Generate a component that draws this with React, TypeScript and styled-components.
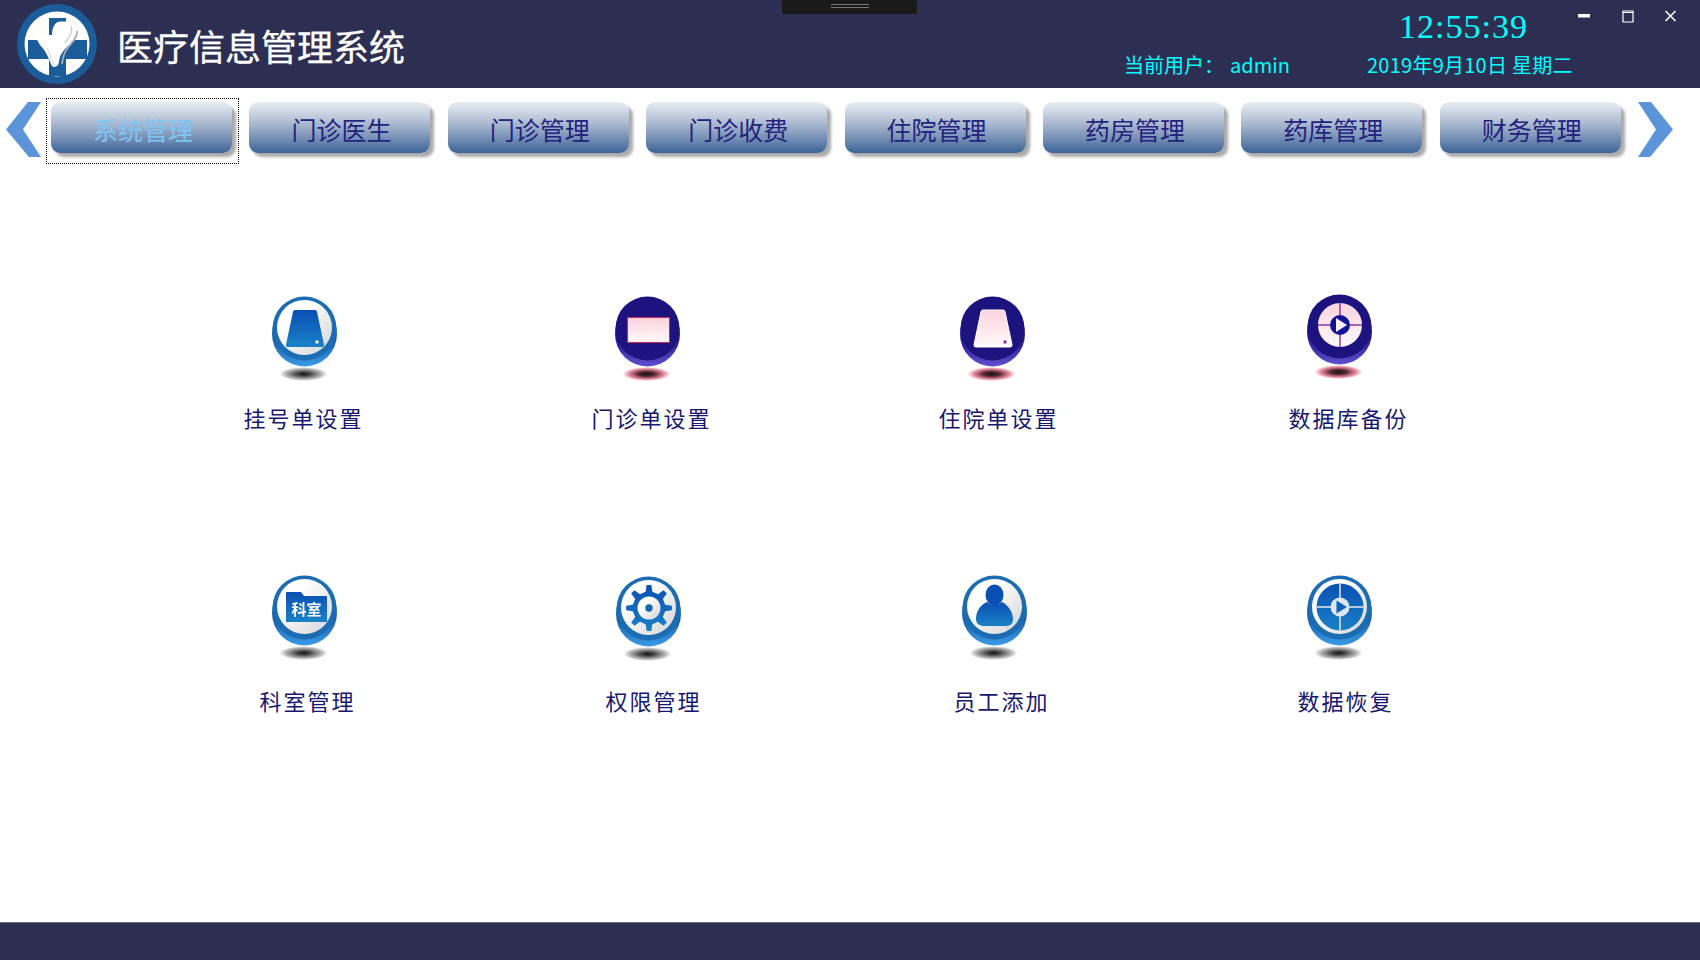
import React, { useId } from 'react';
import styled, { createGlobalStyle } from 'styled-components';

const SANS = `"Noto Sans CJK SC", "Liberation Sans", sans-serif`;

const GlobalStyle = createGlobalStyle`
    html, body {
        margin: 0;
        padding: 0;
        background: #fff;
    }
`;

const Page = styled.div`
    position: relative;
    display: flex;
    flex-direction: column;
    width: 1700px;
    height: 960px;
    overflow: hidden;
    background: #fff;
    font-family: ${SANS};
`;

const Header = styled.header`
    display: flex;
    flex: none;
    height: 88px;
    background: #2d2f52;
`;

const DragHandle = styled.div`
    position: absolute;
    top: 0;
    left: 782px;
    width: 135px;
    height: 14px;
    background: #1a1a1a;

    &::after {
        content: '';
        position: absolute;
        top: 4px;
        left: 49px;
        width: 38px;
        height: 2px;
        border-top: 1px solid #777;
        border-bottom: 1px solid #777;
    }
`;

const Brand = styled.div`
    display: flex;
    align-items: center;
    padding-left: 17px;
    gap: 20px;
`;

const Title = styled.h1`
    margin: 1px 0 0;
    font-size: 36px;
    font-weight: 400;
    line-height: 1;
    color: #fff;
    -webkit-text-stroke: 0.3px #fff;
`;

const InfoBlock = styled.div`
    display: flex;
    flex-direction: column;
    width: 450px;
    margin-left: auto;
`;

const Clock = styled.div`
    height: 51px;
    padding-left: 275px;
    font-family: "Liberation Serif", serif;
    font-size: 34px;
    letter-spacing: 1px;
    line-height: 54px;
    color: #00ffff;
`;

const InfoRow = styled.div`
    display: flex;
    font-size: 20px;
    line-height: 28px;
    white-space: nowrap;
    color: #00ffff;
`;

const UserLabel = styled.span`
    width: 106px;
`;

const UserName = styled.span`
    width: 137px;
`;

const DateText = styled.span`
    letter-spacing: 0.25px;
`;

const WinControls = styled.div`
    display: flex;
    flex: none;
    gap: 23.5px;
    width: 126px;
    padding: 6px 0 0;
    box-sizing: border-box;
`;

const WinButton = styled.button`
    width: 20px;
    height: 20px;
    padding: 0;
    border: 0;
    background: none;
    color: #fff;
`;

const Nav = styled.nav`
    display: flex;
    flex: none;
    align-items: flex-start;
    height: 70px;
    padding: 14px 0 0 6px;
    box-sizing: border-box;
`;

const NavArrow = styled.svg<{ $after?: boolean }>`
    flex: none;
    width: 35px;
    height: 55px;
    margin: ${p => (p.$after ? '0 0 0 17px' : '0 10px 0 0')};
`;

const NavList = styled.div`
    display: flex;
    gap: 17.4px;
`;

const NavButton = styled.button<{ $active?: boolean }>`
    position: relative;
    flex: none;
    width: 181px;
    height: 51px;
    padding: 4px 0 0 3px;
    border: 0;
    border-radius: 9px;
    background: linear-gradient(to bottom, #e9eef4 0%, #b6c3d6 35%, #7c94b8 68%, #3b6398 100%);
    box-shadow: 4px 4px 3px #aaa;
    font-family: ${SANS};
    font-size: 25px;
    line-height: 1;
    color: ${p => (p.$active ? '#7cc6f6' : '#23227e')};

    ${p => p.$active && `
        &::after {
            content: '';
            position: absolute;
            top: -4px;
            left: -5px;
            right: -7px;
            bottom: -11px;
            border: 1px dotted #000;
        }
    `}
`;

const Main = styled.main`
    flex: 1;
    padding: 132px 0 0 132px;
`;

const FuncGrid = styled.div`
    display: grid;
    grid-template-columns: repeat(4, 345px);
    row-gap: 134px;
`;

const FuncItem = styled.div`
    display: flex;
    flex-direction: column;
    align-items: center;
`;

const IconSvg = styled.svg<{ $dx: number; $dy: number }>`
    display: block;
    width: 84px;
    height: 96px;
    margin-left: ${p => p.$dx * 2}px;
    margin-top: ${p => p.$dy}px;
    margin-bottom: ${p => -p.$dy}px;
    filter: blur(0.45px);
`;

const FuncLabel = styled.div<{ $dx: number; $top: number }>`
    margin-left: ${p => p.$dx * 2}px;
    margin-top: ${p => p.$top}px;
    font-family: "Liberation Serif", ${SANS};
    font-size: 22px;
    letter-spacing: 2px;
    line-height: 30px;
    color: #17176f;
`;

const Footer = styled.footer`
    flex: none;
    height: 38px;
    box-sizing: border-box;
    border-top: 1px solid #6d6e85;
    background: #2d2f52;
`;

const Logo: React.FC = () => (
    <svg width="80" height="80" viewBox="0 0 80 80">
        <circle cx="40" cy="40" r="40" fill="#1b5c9b" />
        <circle cx="40" cy="40" r="32.500" fill="#fdfdfb" />
        <path d="M32 14h17v22h21v19H49v17H32V55H11V36h21z" fill="#1b5c9b" />
        <path
            d="M18 33c3-2 11-2 17-2 0-5 1-9 4-12 6-3 16-1 21 4 3 4 2 8-2 13-3 3-6 5-8 7-4 4-6 7-7 10-1 3-1 6-2 8-2 2-4 2-5 2-3-3-3-7-5-10-2-5-5-9-8-12-2-3-3-6-5-8z"
            fill="#fff"
        />
        <path d="M60 27c1 7-6 12-10 18-4 5-4 10-5 15" fill="none" stroke="#a9adb4" strokeWidth="1.700" />
        <path d="M54 22c3 6-2 11-6 17" fill="none" stroke="#c9ccd2" strokeWidth="1.300" />
        <path d="M30 44c3 5 4 11 7 17" fill="none" stroke="#dcdde0" strokeWidth="1.200" />
    </svg>
);

type Tone = 'blue' | 'purple';
type Glyph = 'drive' | 'card' | 'target' | 'folder' | 'gear' | 'person' | 'restore';

const TONES = {
    blue: { ring: '#1c6cb4', lip1: '#1a62a9', lip2: '#3a9be8', shadow: '#999', mid: '#555' },
    purple: { ring: '#1d137f', lip1: '#241a8c', lip2: '#5f50cf', shadow: '#d9667f', mid: '#5a2a35' },
};

const gearPath = (cx: number, cy: number, outer: number, inner: number, teeth: number) => {
    const step = (Math.PI * 2) / teeth;
    const pts: string[] = [];
    for (let i = 0; i < teeth; i++) {
        const a = i * step - Math.PI / 2;
        const corners: [number, number][] = [
            [inner, a - step * 0.26],
            [outer, a - step * 0.13],
            [outer, a + step * 0.13],
            [inner, a + step * 0.26],
        ];
        corners.forEach(([r, t]) => {
            pts.push(`${(cx + r * Math.cos(t)).toFixed(2)} ${(cy + r * Math.sin(t)).toFixed(2)}`);
        });
    }
    return `M${pts.join('L')}Z`;
};

const FuncIcon: React.FC<{ tone: Tone; glyph: Glyph; dx: number; dy: number }> = ({ tone, glyph, dx, dy }) => {
    const id = useId();
    const c = TONES[tone];
    const blueFill = `url(#${id}-fill)`;
    const whiteDisc = tone === 'blue';

    return (
        <IconSvg viewBox="0 0 84 96" $dx={dx} $dy={dy}>
            <defs>
                <linearGradient id={`${id}-lip`} x1="0" y1="0" x2="0" y2="1">
                    <stop offset="0.6" stopColor={c.lip1} />
                    <stop offset="1" stopColor={c.lip2} />
                </linearGradient>
                <linearGradient id={`${id}-disc`} x1="0" y1="0" x2="1" y2="1">
                    <stop offset="0.3" stopColor="#ffffff" />
                    <stop offset="1" stopColor="#d4d4d6" />
                </linearGradient>
                <linearGradient id={`${id}-fill`} x1="0" y1="0" x2="0" y2="1">
                    <stop offset="0" stopColor="#0a4fb4" />
                    <stop offset="1" stopColor="#1a82c6" />
                </linearGradient>
                <linearGradient id={`${id}-pink`} x1="0" y1="0" x2="0" y2="1">
                    <stop offset="0" stopColor="#fbd3de" />
                    <stop offset="1" stopColor="#fffafb" />
                </linearGradient>
                <radialGradient id={`${id}-shadow`}>
                    <stop offset="0" stopColor="#111" />
                    <stop offset="0.35" stopColor={c.mid} />
                    <stop offset="0.72" stopColor={c.shadow} stopOpacity="0.8" />
                    <stop offset="1" stopColor={c.shadow} stopOpacity="0" />
                </radialGradient>
            </defs>

            <ellipse cx="40.500" cy="84" rx="24" ry="7" fill={`url(#${id}-shadow)`} />
            <circle cx="41.500" cy="44" r="32.500" fill={`url(#${id}-lip)`} />
            <circle cx="41.500" cy="38.500" r="32" fill={c.ring} />

            {whiteDisc && <circle cx="41.500" cy="37.500" r="27.500" fill={`url(#${id}-disc)`} />}

            {glyph === 'drive' && (
                <>
                    <path
                        d="M32 20h20a2 2 0 0 1 2 1.700l7 33a2 2 0 0 1-2 2.300H25a2 2 0 0 1-2-2.300l7-33a2 2 0 0 1 2-1.700z"
                        fill={tone === 'blue' ? blueFill : `url(#${id}-pink)`}
                        stroke={tone === 'blue' ? 'none' : '#fff'}
                    />
                    <circle cx="54" cy="52" r="1.700" fill={tone === 'blue' ? '#fff' : '#8a2fa8'} />
                </>
            )}

            {glyph === 'card' && (
                <rect x="21.500" y="27.500" width="42" height="25" fill={`url(#${id}-pink)`} stroke="#c22a58" strokeWidth="1.100" />
            )}

            {glyph === 'target' && (
                <>
                    <circle cx="42" cy="37" r="22" fill={`url(#${id}-pink)`} />
                    <path d="M42 15v44M20 37h44" stroke="#8c3c9c" strokeWidth="1.500" />
                    <circle cx="42" cy="37" r="10" fill="#14149a" />
                    <path d="M38 30l11 7-11 7z" fill="#fbeef4" />
                </>
            )}

            {glyph === 'folder' && (
                <>
                    <path d="M23 24a1 1 0 0 1 1-1h14l3 4h22a1 1 0 0 1 1 1v25H23z" fill={blueFill} />
                    <text x="43.500" y="46" textAnchor="middle" fill="#fff" fontSize="15" fontWeight="700" fontFamily={SANS}>
                        科室
                    </text>
                </>
            )}

            {glyph === 'gear' && (
                <>
                    <path d={gearPath(42, 38, 23, 16.500, 8)} fill={blueFill} />
                    <circle cx="42" cy="38" r="11.500" fill={`url(#${id}-disc)`} />
                    <circle cx="42" cy="38" r="3.700" fill="#1565b0" />
                </>
            )}

            {glyph === 'person' && (
                <>
                    <ellipse cx="41.500" cy="26" rx="9" ry="10.500" fill="#0a50b4" />
                    <path
                        d="M34 33c-7 3-11 10-11 17 0 5 4 7 8 7h22c4 0 7-2 7-7 0-7-5-14-11-17-4 4-11 4-15 0z"
                        fill={blueFill}
                    />
                </>
            )}

            {glyph === 'restore' && (
                <>
                    <circle cx="42" cy="38" r="23.500" fill={blueFill} />
                    <path d="M42 14.500v47M18.500 38h47" stroke="#e4e8f0" strokeWidth="1.500" />
                    <circle cx="42" cy="38" r="9.500" fill="#dfe6f2" />
                    <path d="M38.500 31.500l10.500 6.500-10.500 6.500z" fill="#0f63b8" />
                </>
            )}
        </IconSvg>
    );
};

const TABS = ['系统管理', '门诊医生', '门诊管理', '门诊收费', '住院管理', '药房管理', '药库管理', '财务管理'];

const FUNCS: { label: string; tone: Tone; glyph: Glyph; dx: number; dy: number; labelDx: number; top: number }[] = [
    { label: '挂号单设置', tone: 'blue', glyph: 'drive', dx: 0, dy: 0, labelDx: -1, top: 19 },
    { label: '门诊单设置', tone: 'purple', glyph: 'card', dx: -2, dy: 0, labelDx: 2, top: 19 },
    { label: '住院单设置', tone: 'purple', glyph: 'drive', dx: -2, dy: 0, labelDx: 4, top: 19 },
    { label: '数据库备份', tone: 'purple', glyph: 'target', dx: 0, dy: -2, labelDx: 9, top: 19 },
    { label: '科室管理', tone: 'blue', glyph: 'folder', dx: 0, dy: 0, labelDx: 3, top: 23 },
    { label: '权限管理', tone: 'blue', glyph: 'gear', dx: -1, dy: 1, labelDx: 4, top: 23 },
    { label: '员工添加', tone: 'blue', glyph: 'person', dx: 0, dy: 0, labelDx: 7, top: 23 },
    { label: '数据恢复', tone: 'blue', glyph: 'restore', dx: 0, dy: 0, labelDx: 6, top: 23 },
];

export default function App() {
    return (
        <Page>
            <GlobalStyle />
            <Header>
                <Brand>
                    <Logo />
                    <Title>医疗信息管理系统</Title>
                </Brand>
                <InfoBlock>
                    <Clock>12:55:39</Clock>
                    <InfoRow>
                        <UserLabel>当前用户：</UserLabel>
                        <UserName>admin</UserName>
                        <DateText>2019年9月10日 星期二</DateText>
                    </InfoRow>
                </InfoBlock>
                <WinControls>
                    <WinButton aria-label="最小化">
                        <svg width="20" height="20" viewBox="0 0 20 20">
                            <rect x="4" y="8" width="12" height="3.500" fill="currentColor" />
                        </svg>
                    </WinButton>
                    <WinButton aria-label="最大化">
                        <svg width="20" height="20" viewBox="0 0 20 20">
                            <path d="M5 5h10v11H5z M5 6.500h10" fill="none" stroke="currentColor" strokeWidth="1.200" />
                        </svg>
                    </WinButton>
                    <WinButton aria-label="关闭">
                        <svg width="20" height="20" viewBox="0 0 20 20">
                            <path d="M4.500 5l10 10M14.500 5l-10 10" fill="none" stroke="currentColor" strokeWidth="1.600" />
                        </svg>
                    </WinButton>
                </WinControls>
            </Header>
            <DragHandle />

            <Nav>
                <NavArrow viewBox="0 0 35 55">
                    <path d="M22 0h13L17 27.500 35 55H23L0 27.500z" fill="#5b94d8" />
                </NavArrow>
                <NavList>
                    {TABS.map((tab, i) => (
                        <NavButton key={tab} $active={i === 0}>
                            {tab}
                        </NavButton>
                    ))}
                </NavList>
                <NavArrow viewBox="0 0 35 55" $after>
                    <path d="M13 0H0l18 27.500L0 55h12l23-27.500z" fill="#5b94d8" />
                </NavArrow>
            </Nav>

            <Main>
                <FuncGrid>
                    {FUNCS.map(f => (
                        <FuncItem key={f.label}>
                            <FuncIcon tone={f.tone} glyph={f.glyph} dx={f.dx} dy={f.dy} />
                            <FuncLabel $dx={f.labelDx} $top={f.top}>
                                {f.label}
                            </FuncLabel>
                        </FuncItem>
                    ))}
                </FuncGrid>
            </Main>

            <Footer />
        </Page>
    );
}
